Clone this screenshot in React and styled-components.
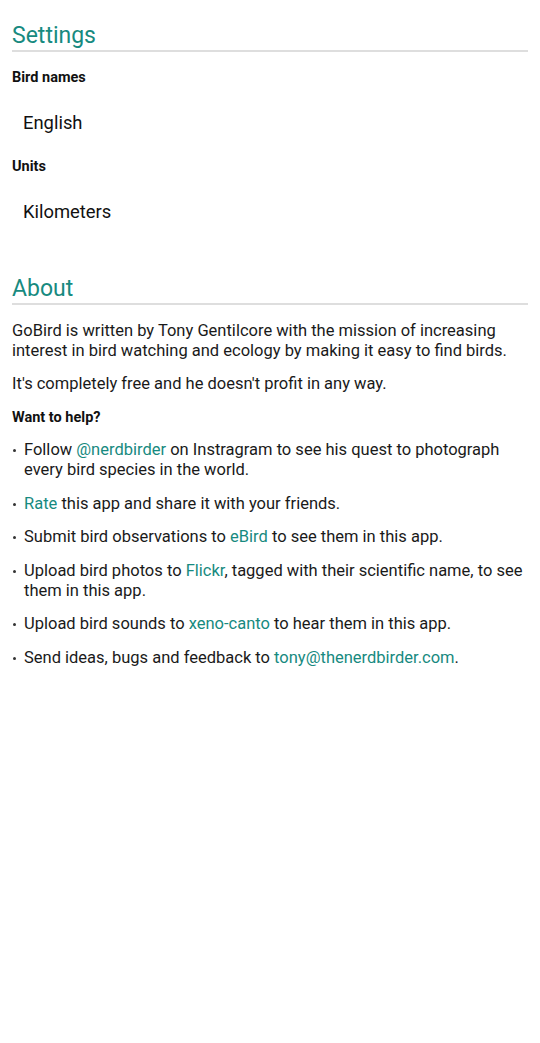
import React from 'react';
import styled, { createGlobalStyle } from 'styled-components';

const GlobalStyle = createGlobalStyle`
  html, body {
    margin: 0;
    padding: 0;
    background: #ffffff;
  }
  body {
    font-family: Roboto, "Noto Sans", "Liberation Sans", sans-serif;
    color: #1a1a1a;
  }
`;

const teal = '#178a80';

const Page = styled.div`
  padding: 22px 12px 40px 12px;
`;

const Section = styled.section`
  margin-bottom: ${props => props.gap || 0}px;
`;

const SectionTitle = styled.h2`
  margin: 0;
  font-size: 23px;
  font-weight: 400;
  line-height: 28px;
  color: ${teal};
  border-bottom: 2px solid #dedede;
`;

const Label = styled.h4`
  margin: ${props => props.top || 15}px 0 0 0;
  font-size: 14.5px;
  font-weight: 700;
  line-height: 20px;
  color: #111;
`;

const Choice = styled.div`
  padding: 0 11px;
  font-size: 18.4px;
  line-height: 24px;
  margin: 23px 0 0 0;
  color: #111;
`;

const Para = styled.p`
  margin: ${props => props.top || 13}px 0 0 0;
  font-size: 16.5px;
  line-height: 20px;
  color: #1a1a1a;
`;

const List = styled.ul`
  list-style: none;
  margin: 12px 0 0 0;
  padding: 0;
`;

const Item = styled.li`
  position: relative;
  padding-left: 12px;
  font-size: 16.5px;
  line-height: 20px;
  margin-bottom: 13.5px;
  color: #1a1a1a;

  &::before {
    content: '';
    position: absolute;
    left: 1px;
    top: 9px;
    width: 3px;
    height: 3px;
    border-radius: 50%;
    background: #333;
  }
`;

const Link = styled.a`
  color: ${teal};
  text-decoration: none;
`;

const links = [
  <>Follow <Link>@nerdbirder</Link> on Instragram to see his quest to photograph every bird species in the world.</>,
  <><Link>Rate</Link> this app and share it with your friends.</>,
  <>Submit bird observations to <Link>eBird</Link> to see them in this app.</>,
  <>Upload bird photos to <Link>Flickr</Link>, tagged with their scientific name, to see them in this app.</>,
  <>Upload bird sounds to <Link>xeno-canto</Link> to hear them in this app.</>,
  <>Send ideas, bugs and feedback to <Link>tony@thenerdbirder.com</Link>.</>,
];

const App = () => (
  <Page>
    <GlobalStyle />
    <Section gap={51}>
      <SectionTitle>Settings</SectionTitle>
      <Label top={16}>Bird names</Label>
      <Choice>English</Choice>
      <Label top={22}>Units</Label>
      <Choice>Kilometers</Choice>
    </Section>
    <Section>
      <SectionTitle>About</SectionTitle>
      <Para top={16}>
        GoBird is written by Tony Gentilcore with the mission of increasing interest in bird
        watching and ecology by making it easy to find birds.
      </Para>
      <Para>It's completely free and he doesn't profit in any way.</Para>
      <Label top={14}>Want to help?</Label>
      <List>
        {links.map((l, i) => (
          <Item key={i}>{l}</Item>
        ))}
      </List>
    </Section>
  </Page>
);

export default App;
